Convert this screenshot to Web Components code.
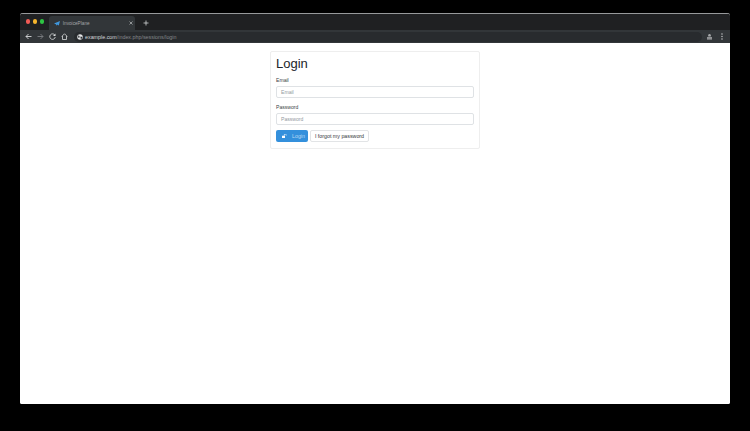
<!DOCTYPE html>
<html lang="en"><head><meta charset="utf-8"><title>InvoicePlane</title>
<style>
html,body{margin:0;height:100%;background:#000;overflow:hidden}
body{box-sizing:border-box;padding:13px 20px 27px;font-family:"Liberation Sans",Arial,sans-serif}
browser-window{height:100%}
</style></head><body>
<browser-window>
  <tab-strip></tab-strip>
  <nav-bar></nav-bar>
  <login-card></login-card>
</browser-window>
<script>
function def(name,html){customElements.define(name,class extends HTMLElement{constructor(){super();this.attachShadow({mode:'open'}).innerHTML=html;}});}
def('browser-window',`<style>:host{display:flex;flex-direction:column;border-radius:3px 3px 2px 2px;overflow:hidden;background:#fff}</style><slot></slot>`);
def('tab-strip',`<style>:host{display:flex;align-items:flex-end;height:17px;box-sizing:border-box;padding:1px 0 0 5.7px;background:#1f2022;border-top:1px solid #97999b}
.dots{display:flex;gap:2.4px;align-self:center;margin-bottom:2px}
.dots i{width:4.6px;height:4.6px;border-radius:50%;display:block}
.tab{width:86px;height:14px;margin-left:4.5px;background:#323639;border-radius:3px 3px 0 0;display:flex;align-items:center;padding:0 2px 0 5px;box-sizing:border-box;color:#a4a7aa;font:4.7px "Liberation Sans",sans-serif;gap:3px}
.tab span{flex:1;white-space:nowrap}
.tab svg{display:block;flex:none}
.plus{margin:1px 0 0 8px;align-self:center}
</style>
<div class="dots"><i style="background:#f25a55"></i><i style="background:#f5b42c"></i><i style="background:#2ec443"></i></div>
<div class="tab"><svg width="6" height="5" viewBox="0 0 12 10"><path d="M0 5.2 12 0 9.5 9 6 7 4.5 9.5 3.8 6.4z" fill="#3f97dc"/></svg><span>InvoicePlane</span>
<svg width="4" height="4" viewBox="0 0 8 8"><path d="M1 1l6 6M7 1 1 7" stroke="#c4c6c8" stroke-width="1.3"/></svg></div>
<svg class="plus" width="6" height="6" viewBox="0 0 12 12"><path d="M6 1v10M1 6h10" stroke="#d3d5d7" stroke-width="1.6"/></svg>`);
def('nav-bar',`<style>:host{display:flex;align-items:center;height:13px;background:#323639;padding:0 7px 0 5px;box-sizing:border-box}
svg{display:block;flex:none}
.btns{display:flex;gap:5px;align-items:center}
.omni{flex:1;height:10px;margin-left:5.5px;background:#282b2e;border-radius:5px;display:flex;align-items:center;gap:2.5px;padding-left:3px;font:5.35px "Liberation Sans",sans-serif;color:#85888b;white-space:nowrap}
.omni b{font-weight:400;color:#d6d8d9}
.right{display:flex;gap:9.5px;align-items:center;margin-left:5px}
</style>
<div class="btns">
<svg width="7" height="7" viewBox="0 0 14 14"><path d="M13 7H2M7 2 2 7l5 5" fill="none" stroke="#d8dadb" stroke-width="1.8"/></svg>
<svg width="7" height="7" viewBox="0 0 14 14"><path d="M1 7h11M7 2l5 5-5 5" fill="none" stroke="#7d8083" stroke-width="1.8"/></svg>
<svg width="7" height="7" viewBox="0 0 14 14"><path d="M11.5 4A5.5 5.5 0 1 0 12.5 8" fill="none" stroke="#d8dadb" stroke-width="1.7"/><path d="M13 1v5H8z" fill="#d8dadb"/></svg>
<svg width="7" height="7" viewBox="0 0 14 14"><path d="M1.5 7 7 1.5 12.5 7M3 6v7h8V6" fill="none" stroke="#d8dadb" stroke-width="1.6"/></svg>
</div>
<div class="omni"><svg width="6" height="6" viewBox="0 0 12 12"><circle cx="6" cy="6" r="5.5" fill="#e4e5e6"/><path d="M2 3l3 1 0 3-2 1zM7 5l4 1-2 4-2-1z" fill="#2b2d30"/></svg><span><b>example.com</b>/index.php/sessions/login</span></div>
<div class="right">
<svg width="5" height="6" viewBox="0 0 12 14"><path d="M3 6V3a3 3 0 0 1 6 0v3z" fill="#a8aaac"/><path d="M0 7h12v6H0z" fill="#a8aaac"/><path d="M0 9.5h12" stroke="#323639"/></svg>
<svg width="2" height="7" viewBox="0 0 4 14"><circle cx="2" cy="2" r="1.3" fill="#d8dadb"/><circle cx="2" cy="7" r="1.3" fill="#d8dadb"/><circle cx="2" cy="12" r="1.3" fill="#d8dadb"/></svg>
</div>`);
def('form-field',`<style>:host{display:block;margin-bottom:5px}
label{display:block;font-size:5.1px;line-height:8px;color:#3a3f44;margin-bottom:1.5px}
.in{height:12.5px;box-sizing:border-box;border:1px solid #dfe2e5;border-radius:2px;display:flex;align-items:center;padding-left:4px;font-size:5.1px;color:#92989e}
</style><label><slot name="label"></slot></label><div class="in"><slot></slot></div>`);
def('login-card',`<style>:host{flex:1;display:flex;justify-content:center;align-items:flex-start;padding-top:8px;background:#fff;min-height:0}
.card{width:210px;height:98px;box-sizing:border-box;border:1px solid #eeeeee;border-radius:2px;padding:3.5px 5px;color:#212529;font-family:"Liberation Sans",sans-serif}
h1{font-size:13px;font-weight:400;line-height:16px;margin:0 0 4.5px}
.btns{display:flex;gap:2px;margin-top:1.5px}
.b{height:12px;box-sizing:border-box;border-radius:2px;display:flex;align-items:center;font-size:5.3px;white-space:nowrap}
.p{width:32px;background:#3490dc;color:#b9d9f3;padding-left:5.5px;gap:5.5px}
.s{width:59px;justify-content:center;color:#33373b;border:1px solid #e2e4e6}
svg{display:block}
</style>
<div class="card"><h1>Login</h1>
<form-field><span slot="label">Email</span>Email</form-field>
<form-field><span slot="label">Password</span>Password</form-field>
<div class="btns"><div class="b p"><svg width="5" height="4" viewBox="0 0 10 8"><path d="M0 3.5h6V8H0z" fill="#fff"/><path d="M4.5 3.5V2a2 2 0 0 1 4 0v1" fill="none" stroke="#fff" stroke-width="1.3"/></svg>Login</div><div class="b s">I forgot my password</div></div>
</div>`);
</script>
</body></html>
